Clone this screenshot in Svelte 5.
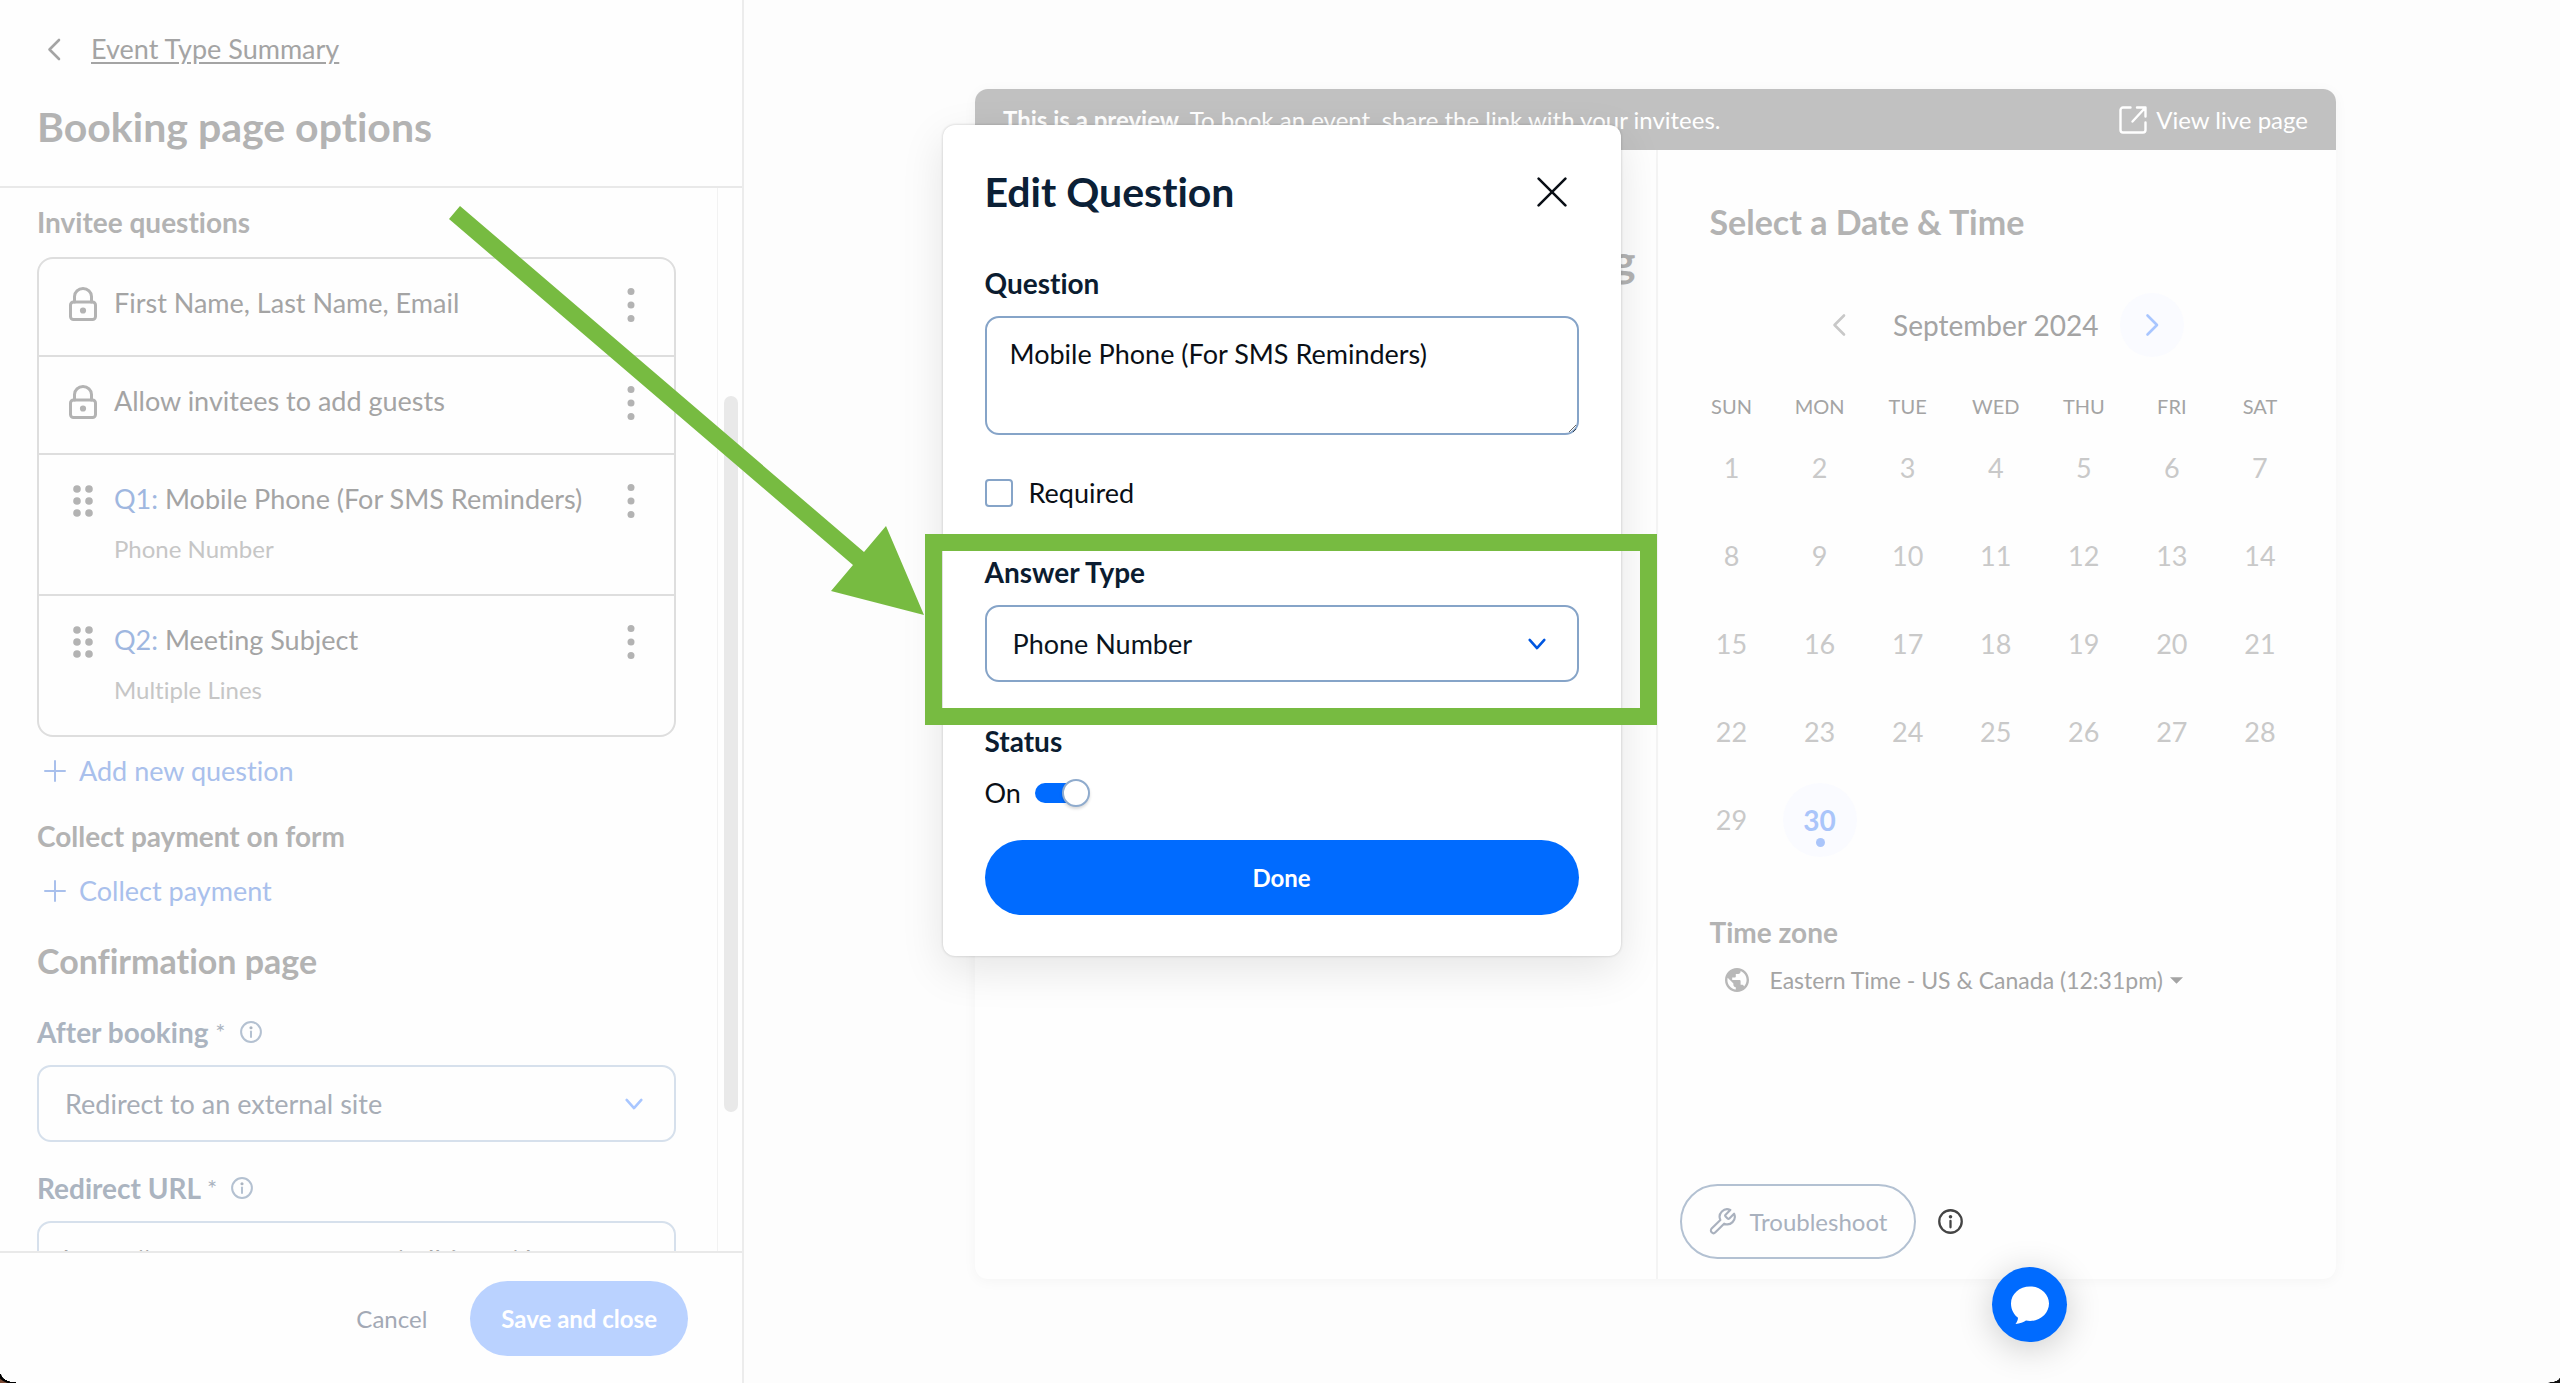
<script lang="ts">
  type Question = { id: number; title: string; type?: string };

  const questions: Question[] = [
    { id: 0, title: "First Name, Last Name, Email" },
    { id: 0, title: "Allow invitees to add guests" },
    { id: 1, title: "Mobile Phone (For SMS Reminders)", type: "Phone Number" },
    { id: 2, title: "Meeting Subject", type: "Multiple Lines" },
  ];

  const WEEKDAYS = ["SUN", "MON", "TUE", "WED", "THU", "FRI", "SAT"];
  const DAYS_IN_MONTH = 30;
  const today = 30;

  // September 2024 starts on a Sunday, so weeks fill from the first column.
  const weeks = Array.from({ length: Math.ceil(DAYS_IN_MONTH / 7) }, (_, w) =>
    WEEKDAYS.map((_, d) => w * 7 + d + 1).filter((n) => n <= DAYS_IN_MONTH),
  );

  let questionText = $state("Mobile Phone (For SMS Reminders)");
  let required = $state(false);
  let answerType = $state("Phone Number");
  let enabled = $state(true);
  let afterBooking = $state("Redirect to an external site");
  let redirectUrl = $state("https://www.acmecorp.com/calltimes/d");
</script>

{#snippet chevron(d: string)}
  <svg class="chev" viewBox="0 0 24 24" aria-hidden="true"><path {d} /></svg>
{/snippet}

{#snippet info()}
  <svg class="info" viewBox="0 0 24 24" aria-hidden="true">
    <circle cx="12" cy="12" r="10.8" />
    <path d="M12 11.5v6" />
    <circle class="dot" cx="12" cy="7.4" r="1.7" />
  </svg>
{/snippet}

{#snippet plus()}
  <svg class="plus" viewBox="0 0 22 22" aria-hidden="true"><path d="M11 1v20M1 11h20" /></svg>
{/snippet}

<div class="app">
  <aside class="sidebar">
    <header class="side-head">
      <div class="back">
        <button class="icon-btn" aria-label="Back">{@render chevron("M17 3L7.5 12.5L17 22")}</button>
        <a href="#summary">Event Type Summary</a>
      </div>
      <h1>Booking page options</h1>
    </header>

    <div class="side-body">
      <div class="side-content">
        <h3>Invitee questions</h3>
        <ul class="questions">
          {#each questions as q (q.title)}
            <li>
              {#if q.id}
                <svg class="grip" viewBox="0 0 20 32" aria-hidden="true">
                  {#each [4, 16, 28] as y (y)}
                    <circle cx="4" cy={y} r="3.8" />
                    <circle cx="16" cy={y} r="3.8" />
                  {/each}
                </svg>
              {:else}
                <svg class="lock" viewBox="0 0 28 34" aria-hidden="true">
                  <rect x="1.5" y="15" width="25" height="17.5" rx="3" />
                  <path d="M5.5 15V9.500a8.500 8 0 0 1 17 0V15" />
                  <circle cx="14" cy="23.500" r="1.600" />
                </svg>
              {/if}
              <div class="q-text">
                <span>{#if q.id}<b>Q{q.id}:</b>{" "}{/if}{q.title}</span>
                {#if q.type}<small>{q.type}</small>{/if}
              </div>
              <button class="icon-btn kebab" aria-label="Question menu">
                <svg viewBox="0 0 8 36" aria-hidden="true">
                  <circle cx="4" cy="4.500" r="3.500" />
                  <circle cx="4" cy="18" r="3.500" />
                  <circle cx="4" cy="31.500" r="3.500" />
                </svg>
              </button>
            </li>
          {/each}
        </ul>
        <button class="add">{@render plus()}Add new question</button>

        <h3 class="payment">Collect payment on form</h3>
        <button class="add">{@render plus()}Collect payment</button>

        <h2>Confirmation page</h2>
        <div class="label muted">
          <label for="after">After booking <sup>*</sup></label>{@render info()}
        </div>
        <div class="select muted">
          <select id="after" bind:value={afterBooking}>
            <option>Redirect to an external site</option>
            <option>Display confirmation page</option>
          </select>
          {@render chevron("M4 7.5L12 16.5L20 7.5")}
        </div>
        <div class="label muted">
          <label for="url">Redirect URL <sup>*</sup></label>{@render info()}
        </div>
        <input id="url" class="url" type="text" bind:value={redirectUrl} />
      </div>
      <div class="scrollbar"><div class="thumb"></div></div>
    </div>

    <footer class="side-foot">
      <button class="cancel">Cancel</button>
      <button class="save">Save and close</button>
    </footer>
  </aside>

  <main class="stage">
    <section class="preview">
      <div class="bar">
        <span><strong>This is a preview.</strong> To book an event, share the link with your invitees.</span>
        <a href="#live">
          <svg viewBox="0 0 28 28" aria-hidden="true">
            <path d="M11.5 1.5H4A2.5 2.5 0 0 0 1.5 4v20A2.5 2.5 0 0 0 4 26.5h20a2.5 2.5 0 0 0 2.5-2.5v-7.5M18 1.5h8.5V10.5M26 2L13.5 15.5" />
          </svg>
          View live page
        </a>
      </div>
      <div class="panels">
        <div class="details"><h2>30 Minute Meeting</h2></div>
        <div class="booking">
          <h2>Select a Date &amp; Time</h2>
          <div class="month">
            <button class="icon-btn prev" aria-label="Previous month">{@render chevron("M17 2.5L7.5 12L17 21.5")}</button>
            <span>September 2024</span>
            <button class="icon-btn next" aria-label="Next month">{@render chevron("M7.5 2.5L17 12L7.5 21.5")}</button>
          </div>
          <table>
            <thead>
              <tr>{#each WEEKDAYS as d (d)}<th scope="col">{d}</th>{/each}</tr>
            </thead>
            <tbody>
              {#each weeks as week, i (i)}
                <tr>
                  {#each week as day (day)}
                    <td><button class="day" class:today={day === today}>{day}</button></td>
                  {/each}
                </tr>
              {/each}
            </tbody>
          </table>
          <h3>Time zone</h3>
          <button class="zone">
            <svg class="globe" viewBox="2 2 20 20" aria-hidden="true">
              <path d="M12 2C6.48 2 2 6.48 2 12s4.48 10 10 10 10-4.48 10-10S17.52 2 12 2zm-1 17.93c-3.95-.49-7-3.85-7-7.93 0-.62.08-1.21.21-1.79L9 15v1c0 1.1.9 2 2 2v1.93zm6.9-2.54c-.26-.81-1-1.39-1.9-1.39h-1v-3c0-.55-.45-1-1-1H8v-2h2c.55 0 1-.45 1-1V7h2c1.1 0 2-.9 2-2v-.41c2.93 1.19 5 4.06 5 7.41 0 2.08-.8 3.97-2.1 5.39z" />
            </svg>
            <span>Eastern Time - US &amp; Canada (12:31pm)</span>
            <svg class="caret" viewBox="0 0 12 6" aria-hidden="true"><path d="M0 0h12L6 6z" /></svg>
          </button>
          <div class="tools">
            <button class="trouble">
              <svg viewBox="1.5 1 21.5 21.5" aria-hidden="true">
                <path d="M14.7 6.3a1 1 0 0 0 0 1.4l1.6 1.6a1 1 0 0 0 1.4 0l3.77-3.77a6 6 0 0 1-7.94 7.94l-6.91 6.91a2.12 2.12 0 0 1-3-3l6.91-6.91a6 6 0 0 1 7.94-7.94l-3.76 3.76z" />
              </svg>
              Troubleshoot
            </button>
            {@render info()}
          </div>
        </div>
      </div>
    </section>
  </main>

  <div class="overlay">
    <div class="modal" role="dialog" aria-labelledby="modal-title">
      <div class="modal-head">
        <h1 id="modal-title">Edit Question</h1>
        <button class="icon-btn" aria-label="Close">
          <svg class="close" viewBox="0 0 28 28" aria-hidden="true"><path d="M1.5 1.5l25 25M26.5 1.5l-25 25" /></svg>
        </button>
      </div>

      <div class="label"><label for="question">Question</label></div>
      <textarea id="question" bind:value={questionText}></textarea>

      <label class="check"><input type="checkbox" bind:checked={required} />Required</label>

      <div class="answer">
        <div class="label"><label for="answer">Answer Type</label></div>
        <div class="select">
          <select id="answer" bind:value={answerType}>
            <option>Phone Number</option>
            <option>One Line</option>
            <option>Multiple Lines</option>
          </select>
          {@render chevron("M4 7.5L12 16.5L20 7.5")}
        </div>
        <svg class="arrow" viewBox="0 0 478 413" aria-hidden="true">
          <path d="M13 2L417 348L439 322L477 411L384 387L406 361L2 15z" />
        </svg>
        <div class="highlight"></div>
      </div>

      <div class="label">Status</div>
      <label class="toggle">On<input type="checkbox" role="switch" bind:checked={enabled} /></label>
      <button class="done">Done</button>
    </div>
  </div>

  <button class="chat" aria-label="Open chat">
    <svg viewBox="0 0 40 40" aria-hidden="true">
      <path d="M20 1.5c10.5 0 19 7.5 19 17s-8.5 17.5-19 17.5c-1.500 0-2.800-.1-4-.4-2.400 1.800-6.300 3.300-10.500 3.400 1.500-1.800 2.400-3.700 2.500-6.200C4 29.800 1 24.700 1 18.500c0-9.500 8.500-17 19-17z" />
    </svg>
  </button>
  <div class="corner left"></div>
  <div class="corner right"></div>
</div>

<style>
  :global(body) {
    background: #fdfdfd;
  }
  .app {
    --sm: 24px;
    --md: 27px;
    --lg: 28px;
    --blue: #006bff;
    --green: #77bb41;
    --grey: #a4a4a4;
    --navy: #0b1c30;
    position: relative;
    display: flex;
    height: 100vh;
    overflow: hidden;
    color: var(--grey);
    font: 400 var(--md) / 32px Lato, "Open Sans", sans-serif;
    font-variant-ligatures: none;
  }
  h1,
  h2,
  h3,
  ul {
    margin: 0;
    padding: 0;
  }
  h1,
  h2,
  h3 {
    color: #b3b3b3;
    font-weight: 700;
  }
  h1 {
    font-size: 41px;
    line-height: 48px;
  }
  h3 {
    font-size: var(--lg);
  }
  button,
  input,
  select,
  textarea {
    box-sizing: border-box;
    margin: 0;
    font: inherit;
    color: inherit;
  }
  button {
    border: none;
    padding: 0;
    background: none;
    cursor: pointer;
  }
  a {
    color: inherit;
  }
  svg {
    display: block;
    flex: none;
    fill: none;
    stroke: currentColor;
    stroke-linecap: round;
    stroke-linejoin: round;
  }
  .chev {
    width: 24px;
    height: 24px;
    stroke-width: 2.6;
  }
  .icon-btn {
    display: grid;
    place-items: center;
  }

  /* sidebar */
  .sidebar {
    display: flex;
    flex-direction: column;
    flex: none;
    width: 742px;
    border-right: 2px solid #ececec;
    background: #fefefe;
  }
  .side-head {
    padding: 33px 37px 35px;
    border-bottom: 2px solid #e9e9e9;
  }
  .back {
    display: flex;
    align-items: center;
    gap: 25px;
    margin-bottom: 38px;
  }
  .back .icon-btn {
    margin-left: 5px;
  }
  .back a {
    text-underline-offset: 3px;
  }
  .side-body {
    display: flex;
    flex: 1;
    min-height: 0;
  }
  .side-content {
    flex: 1;
    overflow: hidden;
    padding: 18px 41px 0 37px;
  }
  .scrollbar {
    width: 24px;
    border-left: 1px solid #f2f2f2;
  }
  .thumb {
    width: 14px;
    height: 716px;
    margin: 208px 0 0 6px;
    border-radius: 7px;
    background: #e9e9e9;
  }
  .questions {
    margin-top: 19px;
    border: 2px solid #dedede;
    border-radius: 16px;
    list-style: none;
  }
  .questions li {
    display: flex;
    align-items: flex-start;
    padding: 28px 39px 36px 30px;
  }
  .questions li:nth-child(n + 3) {
    padding-bottom: 31px;
  }
  .questions li + li {
    border-top: 2px solid #dedede;
  }
  .lock {
    width: 28px;
    height: 34px;
    margin-bottom: -2px;
    stroke: #b3b3b3;
    stroke-width: 3;
  }
  .grip {
    width: 20px;
    height: 32px;
    margin: 2px 4px 0;
    fill: #b3b3b3;
    stroke: none;
  }
  .q-text {
    display: flex;
    flex: 1;
    flex-direction: column;
    gap: 20px;
    margin-left: 17px;
  }
  .q-text b {
    color: #9fb7e0;
    font-weight: 400;
  }
  .q-text small {
    color: #c6c6c6;
    font-size: var(--sm);
    line-height: 28px;
  }
  .kebab {
    margin-bottom: -4px;
  }
  .kebab svg {
    width: 8px;
    height: 36px;
    fill: #b3b3b3;
    stroke: none;
  }
  .add {
    display: flex;
    align-items: center;
    gap: 13px;
    margin: 18px 0 0 7px;
    color: #a9c0ec;
  }
  .plus {
    width: 22px;
    height: 22px;
    stroke-width: 2;
  }
  .payment {
    margin-top: 33px;
  }
  .payment + .add {
    margin-top: 23px;
  }
  .side-content h2 {
    margin-top: 34px;
    font-size: 34px;
    line-height: 40px;
  }
  .label {
    display: flex;
    align-items: center;
    gap: 14px;
    color: var(--navy);
    font-size: var(--lg);
    font-weight: 700;
  }
  .label.muted {
    margin-top: 35px;
    color: #abb4c0;
  }
  .select.muted + .label.muted {
    margin-top: 30px;
  }
  .label sup {
    font-size: var(--sm);
    font-weight: 400;
    line-height: 0;
    vertical-align: 2px;
  }
  .info {
    width: 22px;
    height: 22px;
    stroke: #b4c1d1;
    stroke-width: 2.2;
  }
  .info .dot {
    fill: currentColor;
    stroke: none;
  }
  .select {
    position: relative;
    margin-top: 17px;
    color: #0a1420;
  }
  .select select,
  .url {
    display: block;
    width: 100%;
    height: 77px;
    padding: 0 26px;
    border: 2px solid #86a4c8;
    border-radius: 14px;
    outline: none;
    background: #fff;
    appearance: none;
  }
  .select .chev {
    position: absolute;
    right: 30px;
    top: 28px;
    width: 24px;
    height: 22px;
    color: #0057e0;
    stroke-width: 2.8;
    pointer-events: none;
  }
  .select.muted {
    color: #a7adb6;
  }
  .select.muted select,
  .url {
    border-color: #d6e0ec;
    background: #fefefe;
  }
  .select.muted .chev {
    color: #a8c6ff;
  }
  .url {
    margin-top: 17px;
    padding: 0 24px;
  }
  .side-foot {
    display: flex;
    justify-content: flex-end;
    align-items: center;
    gap: 43px;
    padding: 28px 54px 27px;
    border-top: 2px solid #e9e9e9;
    color: #a3a9b5;
    font-size: var(--sm);
  }
  .save {
    height: 75px;
    padding: 0 31px;
    border-radius: 38px;
    background: #bad2ff;
    color: #fff;
    font-weight: 700;
  }

  /* preview */
  .stage {
    display: flex;
    flex: 1;
    padding: 89px 224px 104px 231px;
  }
  .preview {
    display: flex;
    flex: 1;
    flex-direction: column;
    border-radius: 13px;
    background: #fefefe;
    box-shadow: 0 2px 14px rgba(0, 0, 0, 0.04);
    overflow: hidden;
  }
  .bar {
    display: flex;
    justify-content: space-between;
    align-items: center;
    height: 61px;
    padding: 0 28px;
    background: #c1c1c1;
    color: #fff;
    font-size: var(--sm);
    line-height: 28px;
  }
  .bar a {
    display: flex;
    align-items: center;
    gap: 9px;
    text-decoration: none;
  }
  .bar svg {
    width: 28px;
    height: 28px;
    stroke-width: 2.4;
  }
  .panels {
    display: grid;
    grid-template-columns: 1fr 1fr;
    flex: 1;
  }
  .details {
    padding: 84px 20px 0 0;
    text-align: right;
  }
  .details h2 {
    font-size: 44px;
    line-height: 52px;
  }
  .booking {
    display: flex;
    flex-direction: column;
    padding: 50px 32px 20px 30px;
    border-left: 2px solid #f4f4f4;
  }
  .booking h2 {
    margin-left: 22px;
    font-size: 34px;
    line-height: 44px;
  }
  .month {
    display: flex;
    justify-content: center;
    align-items: center;
    gap: 22px;
    margin-top: 49px;
    font-size: var(--lg);
  }
  .month .icon-btn {
    width: 64px;
    height: 64px;
    border-radius: 50%;
    color: #c8c8c8;
  }
  .month .next {
    background: #fafbff;
    color: #a8c6ff;
  }
  table {
    width: 100%;
    margin-top: 34px;
    border-collapse: collapse;
    table-layout: fixed;
  }
  th {
    height: 33px;
    padding: 0;
    font-size: 20px;
    font-weight: 400;
    line-height: 30px;
    vertical-align: top;
  }
  td {
    height: 88px;
    padding: 0;
    color: #c9c9c9;
  }
  .day {
    position: relative;
    display: block;
    width: 74px;
    height: 74px;
    margin: 0 auto;
    border-radius: 50%;
  }
  .today {
    background: #fafbff;
    color: #aac5fa;
    font-size: var(--lg);
    font-weight: 700;
  }
  .today::after {
    content: "";
    position: absolute;
    left: 33px;
    bottom: 10px;
    width: 9px;
    height: 9px;
    border-radius: 50%;
    background: currentColor;
  }
  .booking h3 {
    margin: 52px 0 0 22px;
  }
  .zone {
    display: flex;
    align-items: center;
    margin: 16px 0 0 37px;
    font-size: 23px;
  }
  .globe {
    width: 24px;
    height: 24px;
    margin-right: 21px;
    fill: #b8b8b8;
    stroke: none;
  }
  .caret {
    width: 13px;
    height: 7px;
    margin-left: 7px;
    fill: currentColor;
    stroke: none;
  }
  .tools {
    display: flex;
    align-items: center;
    gap: 22px;
    margin: auto 0 0 -8px;
  }
  .trouble {
    display: flex;
    align-items: center;
    gap: 14px;
    height: 75px;
    padding: 0 27px;
    border: 2px solid #b3c1d2;
    border-radius: 38px;
    color: #a9b1be;
    font-size: var(--sm);
  }
  .trouble svg {
    width: 27px;
    height: 27px;
    stroke-width: 1.7;
  }
  .tools .info {
    width: 25px;
    height: 25px;
    color: #444;
    stroke: #444;
  }

  /* dialog */
  .overlay {
    position: absolute;
    inset: 0;
    display: flex;
    justify-content: center;
    align-items: flex-start;
    padding: 125px 0 0 3px;
    pointer-events: none;
  }
  .modal {
    box-sizing: border-box;
    width: 678px;
    padding: 43px 42px 41px;
    border-radius: 12px;
    background: #fff;
    box-shadow:
      0 0 3px rgba(0, 0, 0, 0.2),
      0 14px 44px rgba(0, 0, 0, 0.1);
    color: #0a0f16;
    pointer-events: auto;
  }
  .modal-head {
    display: flex;
    justify-content: space-between;
    align-items: center;
    margin-bottom: 51px;
    padding-right: 12px;
  }
  .modal h1 {
    color: #0b2036;
  }
  .close {
    width: 30px;
    height: 30px;
    stroke-width: 2.4;
  }
  textarea {
    display: block;
    width: 100%;
    height: 119px;
    margin-top: 17px;
    padding: 20px 23px;
    border: 2px solid #86a4c8;
    border-radius: 14px;
    outline: none;
    resize: vertical;
  }
  .check,
  .toggle {
    display: flex;
    align-items: center;
  }
  .check {
    gap: 16px;
    margin: 42px 0 47px;
  }
  .check input {
    width: 28px;
    height: 28px;
    border: 2px solid #86a4c8;
    border-radius: 4px;
    appearance: none;
  }
  .check input:checked {
    background: var(--blue);
  }
  .answer {
    position: relative;
    margin-bottom: 43px;
  }
  .highlight {
    position: absolute;
    inset: -22px -78px -43px -60px;
    border: 17px solid var(--green);
    pointer-events: none;
  }
  .arrow {
    position: absolute;
    top: -352px;
    right: calc(100% + 60px);
    width: 478px;
    height: 413px;
    fill: var(--green);
    stroke: none;
    pointer-events: none;
  }
  .toggle {
    gap: 14px;
    margin: 20px 0 31px;
  }
  .toggle input {
    position: relative;
    width: 54px;
    height: 20px;
    border-radius: 10px;
    background: #c3ccd8;
    appearance: none;
  }
  .toggle input:checked {
    background: var(--blue);
  }
  .toggle input::after {
    content: "";
    position: absolute;
    top: -4px;
    left: 0;
    box-sizing: border-box;
    width: 28px;
    height: 28px;
    border: 2px solid #8fabcd;
    border-radius: 50%;
    background: #fff;
    box-shadow: 0 2px 3px rgba(0, 0, 0, 0.15);
  }
  .toggle input:checked::after {
    left: 27px;
  }
  .done {
    width: 100%;
    height: 75px;
    border-radius: 38px;
    background: var(--blue);
    color: #fff;
    font-size: var(--sm);
    font-weight: 700;
  }

  /* floating */
  .chat {
    position: absolute;
    right: 493px;
    bottom: 41px;
    display: grid;
    place-items: center;
    width: 75px;
    height: 75px;
    border-radius: 50%;
    background: var(--blue);
    box-shadow: 0 6px 36px rgba(0, 0, 0, 0.2);
    color: #fff;
  }
  .chat svg {
    width: 40px;
    height: 40px;
    fill: currentColor;
    stroke: none;
  }
  .corner {
    position: absolute;
    bottom: 0;
    width: 16px;
    height: 9px;
  }
  .corner.left {
    left: 0;
    background: radial-gradient(ellipse at 100% 0, transparent 0 64%, #000 66% 76%, #7a4a35 82%);
  }
  .corner.right {
    right: 0;
    height: 5px;
    background: radial-gradient(ellipse at 0 0, transparent 0 66%, #111 70%);
  }
</style>
